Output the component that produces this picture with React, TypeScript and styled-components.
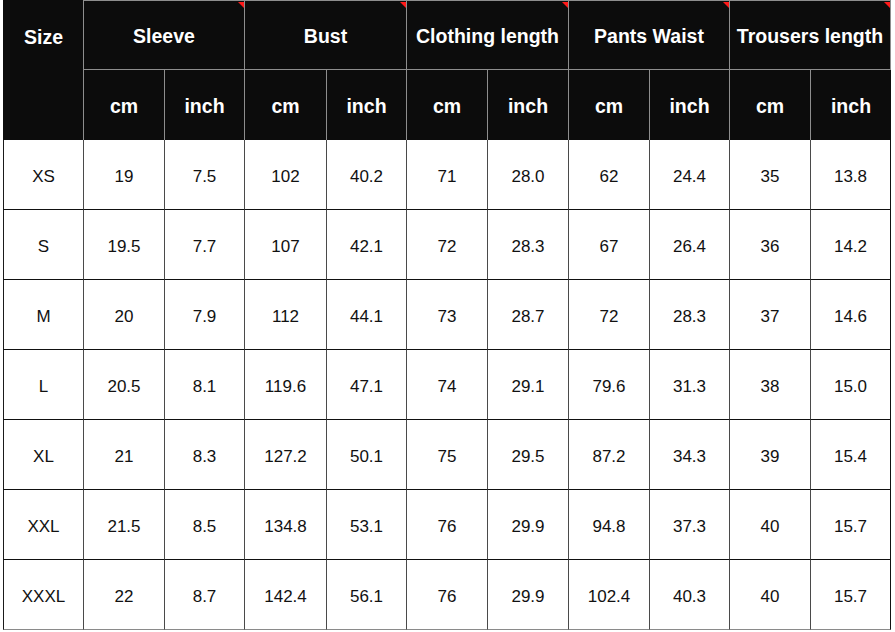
import React from 'react';
import styled, { createGlobalStyle } from 'styled-components';

const GlobalStyle = createGlobalStyle`
  html, body {
    margin: 0;
    padding: 0;
    background: #ffffff;
  }
`;

const groups = ['Sleeve', 'Bust', 'Clothing length', 'Pants Waist', 'Trousers length'];

const rows: [string, ...string[]][] = [
  ['XS', '19', '7.5', '102', '40.2', '71', '28.0', '62', '24.4', '35', '13.8'],
  ['S', '19.5', '7.7', '107', '42.1', '72', '28.3', '67', '26.4', '36', '14.2'],
  ['M', '20', '7.9', '112', '44.1', '73', '28.7', '72', '28.3', '37', '14.6'],
  ['L', '20.5', '8.1', '119.6', '47.1', '74', '29.1', '79.6', '31.3', '38', '15.0'],
  ['XL', '21', '8.3', '127.2', '50.1', '75', '29.5', '87.2', '34.3', '39', '15.4'],
  ['XXL', '21.5', '8.5', '134.8', '53.1', '76', '29.9', '94.8', '37.3', '40', '15.7'],
  ['XXXL', '22', '8.7', '142.4', '56.1', '76', '29.9', '102.4', '40.3', '40', '15.7'],
];

const Grid = styled.div`
  display: grid;
  grid-template-columns: 81px 81px 80px 82px 80px 81px 81px 81px 80px 81px 80px;
  grid-template-rows: repeat(9, 70px);
  margin-left: 3px;
  width: max-content;
  font-family: 'Liberation Sans', Arial, sans-serif;
`;

const HeadCell = styled.div<{ $span?: number; $top?: boolean }>`
  position: relative;
  box-sizing: border-box;
  grid-column: span ${(p) => p.$span || 1};
  display: flex;
  align-items: center;
  justify-content: center;
  padding-top: 3px;
  background: #0c0c0c;
  color: #ffffff;
  font-size: 19.5px;
  font-weight: 700;
  white-space: nowrap;
  border-right: 1px solid #8e8e8e;
  border-bottom: 1px solid #8e8e8e;
  border-top: ${(p) => (p.$top ? '1px solid #8e8e8e' : 'none')};
  &:last-child {
    border-right: none;
  }
`;

const SizeHead = styled(HeadCell)`
  grid-row: span 2;
  align-items: flex-start;
  padding-top: 26px;
  border-left: 1px solid #0c0c0c;
  border-bottom: none;
`;

const Corner = styled.span`
  position: absolute;
  top: 1px;
  right: 0;
  width: 0;
  height: 0;
  border-top: 6px solid #ff1a1a;
  border-left: 6px solid transparent;
`;

const UnitCell = styled(HeadCell)<{ $end?: boolean }>`
  padding-top: 2px;
  border-right: ${(p) => (p.$end ? 'none' : '1px solid #8e8e8e')};
  border-bottom: none;
`;

const Cell = styled.div<{ $first?: boolean; $last?: boolean; $end?: boolean }>`
  box-sizing: border-box;
  display: flex;
  align-items: center;
  justify-content: center;
  padding-top: 5px;
  color: #111111;
  font-size: 17px;
  border-left: ${(p) => (p.$first ? '1px solid #1a1a1a' : 'none')};
  border-right: 1px solid ${(p) => (p.$end ? '#111111' : '#4a4a4a')};
  border-bottom: 1px solid ${(p) => (p.$last ? '#8a8a8a' : '#111111')};
`;

export default function App() {
  return (
    <>
      <GlobalStyle />
      <Grid>
        <SizeHead>Size</SizeHead>
        {groups.map((g) => (
          <HeadCell key={g} $span={2} $top>
            {g}
            <Corner />
          </HeadCell>
        ))}
        {groups.map((g, i) => (
          <React.Fragment key={g}>
            <UnitCell>cm</UnitCell>
            <UnitCell $end={i === groups.length - 1}>inch</UnitCell>
          </React.Fragment>
        ))}
        {rows.map((row, r) =>
          row.map((v, c) => (
            <Cell
              key={`${r}-${c}`}
              $first={c === 0}
              $end={c === row.length - 1}
              $last={r === rows.length - 1}
            >
              {v}
            </Cell>
          ))
        )}
      </Grid>
    </>
  );
}
